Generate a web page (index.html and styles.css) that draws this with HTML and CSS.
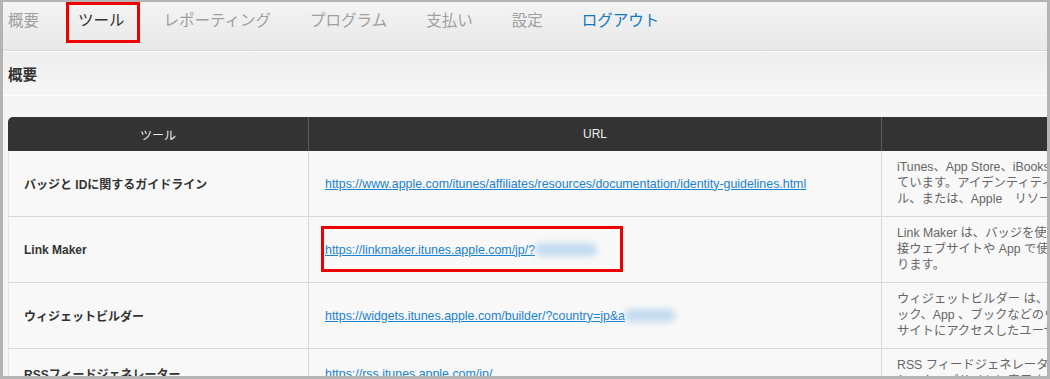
FILE: index.html
```html
<!DOCTYPE html>
<html lang="ja">
<head>
  <meta charset="UTF-8">
  <meta name="viewport" content="width=device-width, initial-scale=1">
  <title>ツール</title>
  <link rel="stylesheet" href="styles.css">
</head>
<body>

  <div class="screen">

    <!-- メインナビゲーション -->
    <nav class="topnav">
      <a class="nav-item">概要</a>
      <a class="nav-item current marked">ツール</a>
      <a class="nav-item">レポーティング</a>
      <a class="nav-item">プログラム</a>
      <a class="nav-item">支払い</a>
      <a class="nav-item">設定</a>
      <a class="nav-item logout">ログアウト</a>
    </nav>

    <div class="subbar">
      <h2>概要</h2>
    </div>

    <div class="content">
      <table class="tools">
        <colgroup>
          <col class="col-name">
          <col class="col-url">
          <col class="col-desc">
        </colgroup>
        <thead>
          <tr>
            <th>ツール</th>
            <th>URL</th>
            <th>説明</th>
          </tr>
        </thead>
        <tbody>
          <tr>
            <td class="name">バッジと IDに関するガイドライン</td>
            <td class="url"><a href="#">https://www.apple.com/itunes/affiliates/resources/documentation/identity-guidelines.html</a></td>
            <td class="desc">iTunes、App Store、iBookstore の各バッジの使用方法を説明し<br>ています。アイデンティティ・ガイドラインには、ロゴ、アートワーク、ファイ<br>ル、または、Apple　リソースの使用に関する規定が含まれます。</td>
          </tr>
          <tr>
            <td class="name">Link Maker</td>
            <td class="url"><span class="marked-link"><a href="#">https://linkmaker.itunes.apple.com/jp/?<span class="blurred"></span></a></span></td>
            <td class="desc">Link Maker は、バッジを使ってコンテンツへのリンクを作成し、直<br>接ウェブサイトや App で使用できるようにするためのツールにな<br>ります。</td>
          </tr>
          <tr>
            <td class="name">ウィジェットビルダー</td>
            <td class="url"><a href="#">https://widgets.itunes.apple.com/builder/?country=jp&amp;a<span class="blurred short"></span></a></td>
            <td class="desc">ウィジェットビルダー は、ウェブサイトに音楽、映画、ブ<br>ック、App 、ブックなどのウィジェットを配置するツールです。ウェブ<br>サイトにアクセスしたユーザがコンテンツを購入できます。</td>
          </tr>
          <tr>
            <td class="name">RSSフィードジェネレーター</td>
            <td class="url"><a href="#">https://rss.itunes.apple.com/jp/</a></td>
            <td class="desc">RSS フィードジェネレータはトップチャートのフィードを作成<br>し、ウェブサイトに表示することができます。</td>
          </tr>
        </tbody>
      </table>
    </div>

  </div>

</body>
</html>
```

FILE: styles.css
```css
html, body {
  margin: 0;
  padding: 0;
  background: #fff;
}

body {
  font-family: "Liberation Sans", "Noto Sans CJK JP", sans-serif;
  font-size: 12px;
  color: #333;
}

.screen {
  width: 1050px;
  height: 379px;
  box-sizing: border-box;
  border-style: solid;
  border-color: #b4b4b4;
  border-width: 2px 3px 3px 3px;
  background: #f5f5f5;
  overflow: hidden;
}

/* ナビゲーション */
.topnav {
  display: flex;
  align-items: flex-start;
  gap: 39px;
  height: 49px;
  box-sizing: border-box;
  padding: 9px 0 0 5px;
  background: linear-gradient(#f4f4f4, #e8e8e8);
  border-bottom: 1px solid #d8d8d8;
}

.nav-item {
  font-size: 15.5px;
  line-height: 20px;
  color: #a0a0a0;
  text-decoration: none;
  white-space: nowrap;
}

.nav-item.current {
  color: #333;
}

.nav-item.logout {
  color: #1179c0;
}

/* 赤枠の注釈 */
.marked {
  position: relative;
}

.marked::after {
  content: "";
  position: absolute;
  left: -12px;
  right: -15px;
  top: -9px;
  bottom: -12px;
  border: 3px solid #ee0000;
}

.subbar {
  display: flex;
  align-items: center;
  height: 45px;
  box-sizing: border-box;
  padding-left: 5px;
  border-top: 1px solid #fff;
  border-bottom: 1px solid #fff;
  background: linear-gradient(#eeeeee, #f6f6f6);
}

.subbar h2 {
  margin: 0;
  font-size: 14.5px;
  font-weight: bold;
  color: #333;
}

/* ツール一覧 */
.content {
  padding: 21px 0 0 5px;
}

.tools {
  table-layout: fixed;
  width: 1280px;
  border-collapse: separate;
  border-spacing: 0;
}

.col-name { width: 301px; }
.col-url { width: 573px; }
.col-desc { width: 406px; }

.tools th {
  height: 34px;
  padding: 0;
  background: #333;
  color: #eee;
  font-size: 12px;
  font-weight: normal;
  border-right: 1px solid #5a5a5a;
}

.tools th:first-child {
  border-top-left-radius: 5px;
}

.tools td {
  background: #f8f8f8;
  border-bottom: 1px solid #d9d9d9;
  border-right: 1px solid #d9d9d9;
  vertical-align: middle;
  padding: 0 16px;
}

.tools td.name {
  font-weight: bold;
  color: #333;
  border-left: 1px solid #e4e4e4;
  padding-left: 15px;
  white-space: nowrap;
}

.tools td.url a {
  font-size: 12.4px;
  color: #1b82d0;
  white-space: nowrap;
}

.tools td.desc {
  vertical-align: top;
  padding: 8px 15px 9px 15px;
  line-height: 16px;
  font-size: 12.3px;
  color: #666;
  white-space: nowrap;
  overflow: hidden;
}

.marked-link {
  position: relative;
  display: inline-block;
}

.marked-link::after {
  content: "";
  position: absolute;
  left: -4px;
  right: -26px;
  top: -17px;
  bottom: -15px;
  border: 3px solid #ee0000;
}

/* ぼかし */
.blurred {
  display: inline-block;
  width: 62px;
  height: 13px;
  vertical-align: -2px;
  background: #c3dbef;
  border-radius: 6px;
  filter: blur(3px);
}

.blurred.short {
  width: 50px;
}
```
